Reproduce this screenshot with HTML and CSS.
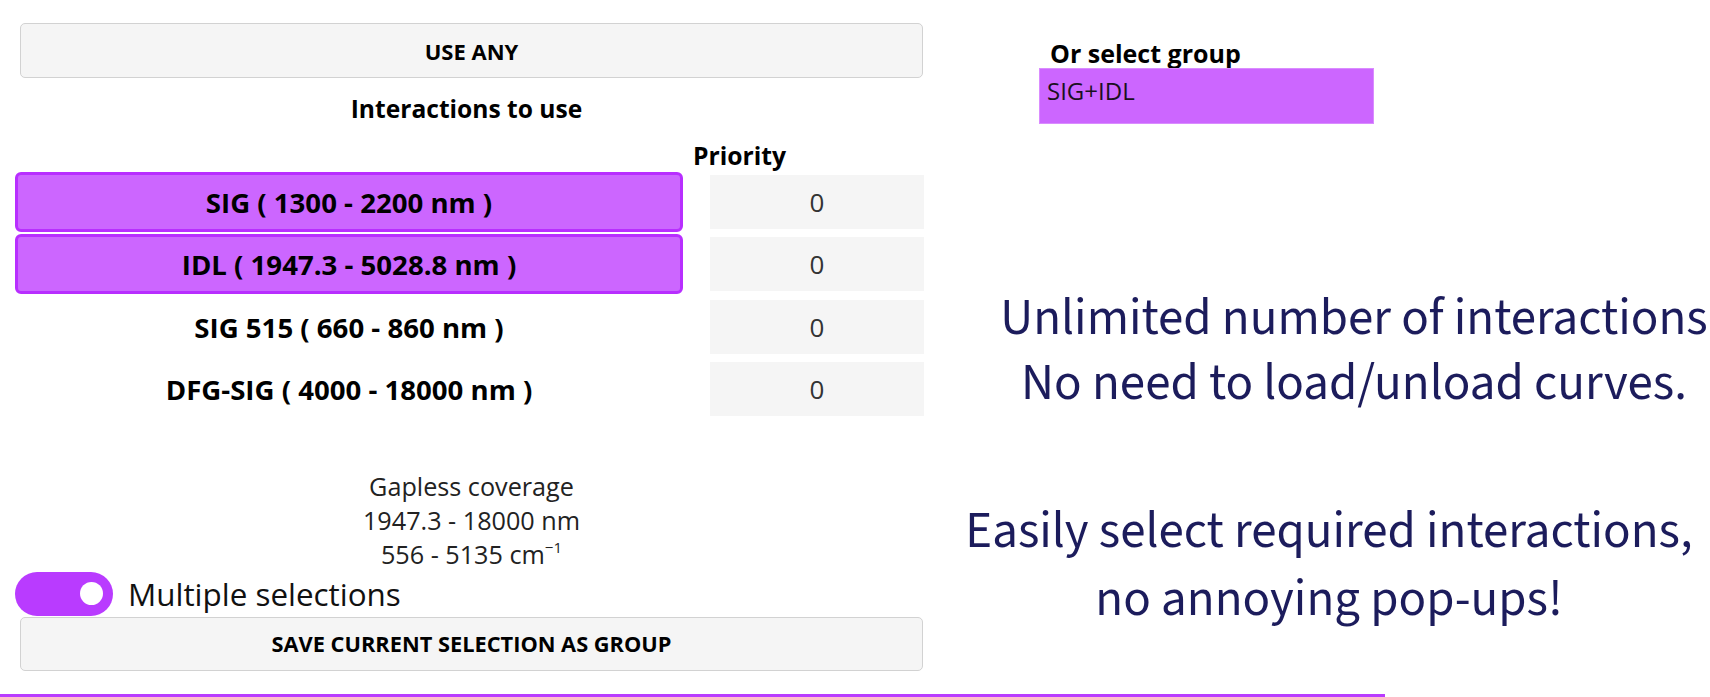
FILE: index.html
```html
<!DOCTYPE html>
<html lang="en">
<head>
<meta charset="utf-8">
<title>Interactions</title>
<link rel="stylesheet" href="styles.css">
</head>
<body>
<div class="page">
  <div class="left">
    <div class="btn-wide btn-top">USE ANY</div>
    <div class="title">Interactions to use</div>
    <div class="prio-head">Priority</div>
    <div class="grid">
      <div class="inter on">SIG ( 1300 - 2200 nm )</div>
      <div class="prio">0</div>
      <div class="inter on">IDL ( 1947.3 - 5028.8 nm )</div>
      <div class="prio">0</div>
      <div class="inter">SIG 515 ( 660 - 860 nm )</div>
      <div class="prio">0</div>
      <div class="inter">DFG-SIG ( 4000 - 18000 nm )</div>
      <div class="prio">0</div>
    </div>
    <div class="coverage">
      <div>Gapless coverage</div>
      <div>1947.3 - 18000 nm</div>
      <div>556 - 5135 cm<sup>−1</sup></div>
    </div>
    <div class="toggle-row">
      <div class="toggle"><div class="knob"></div></div>
      <div class="toggle-label">Multiple selections</div>
    </div>
    <div class="btn-wide btn-save">SAVE CURRENT SELECTION AS GROUP</div>
  </div>
  <div class="right">
    <div class="group-head">Or select group</div>
    <div class="group-box">SIG+IDL</div>
    <div class="note note-1">
      <div>Unlimited number of interactions</div>
      <div>No need to load/unload curves.</div>
    </div>
    <div class="note note-2">
      <div>Easily select required interactions,</div>
      <div>no annoying pop-ups!</div>
    </div>
  </div>
</div>
<div class="rule"></div>
</body>
</html>
```
FILE: styles.css
```css
html, body {
  margin: 0;
  padding: 0;
  width: 1710px;
  height: 697px;
  overflow: hidden;
  background: #ffffff;
}
body {
  font-family: "Open Sans", "Noto Sans", sans-serif;
  color: #000;
}
.page {
  display: flex;
  height: 694px;
}
.left {
  width: 940px;
  flex: none;
  box-sizing: border-box;
  padding: 23px 0 0 15px;
  display: flex;
  flex-direction: column;
}
.btn-wide {
  box-sizing: border-box;
  margin-left: 5px;
  width: 903px;
  background: #f5f5f5;
  border: 1px solid #d2d2d2;
  border-radius: 5px;
  display: flex;
  align-items: center;
  justify-content: center;
  font-weight: 700;
  color: #000;
}
.btn-top {
  height: 55px;
  font-size: 22px;
}
.btn-save {
  height: 54px;
  margin-top: 1px;
  font-size: 21.8px;
}
.title {
  width: 903px;
  margin-left: 0;
  margin-top: 16px;
  line-height: 30px;
  text-align: center;
  font-weight: 700;
  font-size: 24.6px;
}
.prio-head {
  margin-top: 16.5px;
  padding-left: 678px;
  line-height: 30px;
  font-weight: 700;
  font-size: 24.7px;
}
.grid {
  display: grid;
  grid-template-columns: 668px 214px;
  column-gap: 27px;
  grid-auto-rows: 62.5px;
  align-items: center;
}
.inter {
  box-sizing: border-box;
  height: 60px;
  display: flex;
  align-items: center;
  justify-content: center;
  font-weight: 700;
  font-size: 27.6px;
  border: 3px solid transparent;
  border-radius: 6px;
  white-space: nowrap;
}
.inter.on {
  background: #cc66ff;
  border-color: #b82eff;
}
.prio {
  height: 54px;
  background: #f5f5f5;
  display: flex;
  align-items: center;
  justify-content: center;
  font-size: 26px;
  color: #333;
}
.coverage {
  margin-top: 48.75px;
  margin-left: 5px;
  width: 903px;
  text-align: center;
  font-size: 25.2px;
  line-height: 34px;
  color: #222;
}
.coverage sup {
  font-size: 0.6em;
  line-height: 0;
  vertical-align: 0.75em;
}
.toggle-row {
  margin-top: 0.5px;
  height: 44px;
  display: flex;
  align-items: center;
  gap: 15px;
}
.toggle {
  width: 98px;
  height: 44px;
  border-radius: 22px;
  background: #b93bff;
  display: flex;
  align-items: center;
  justify-content: flex-end;
  padding-right: 10px;
  box-sizing: border-box;
}
.knob {
  width: 23px;
  height: 23px;
  border-radius: 50%;
  background: #fff;
}
.toggle-label {
  font-size: 31.4px;
  color: #111;
  line-height: 44px;
}
.right {
  flex: 1;
  display: flex;
  flex-direction: column;
}
.group-head {
  margin-top: 38px;
  padding-left: 110px;
  line-height: 30px;
  font-weight: 700;
  font-size: 25px;
}
.group-box {
  box-sizing: border-box;
  margin-left: 99px;
  width: 335px;
  height: 56px;
  background: #cc66ff;
  border: 1px solid #da8cff;
  padding: 7px 0 0 7px;
  line-height: 30px;
  font-size: 24px;
  color: #1a1020;
}
.note {
  font-family: "Source Sans 3", "Lato", sans-serif;
  font-size: 51px;
  color: #1c1c5c;
  text-align: center;
  white-space: nowrap;
}
.note-1 {
  width: 828px;
  margin-top: 161.5px;
  line-height: 65px;
}
.note-2 {
  width: 778px;
  margin-top: 81.5px;
  line-height: 68px;
}
.rule {
  width: 1385px;
  height: 3px;
  background: #b93bff;
}
```
